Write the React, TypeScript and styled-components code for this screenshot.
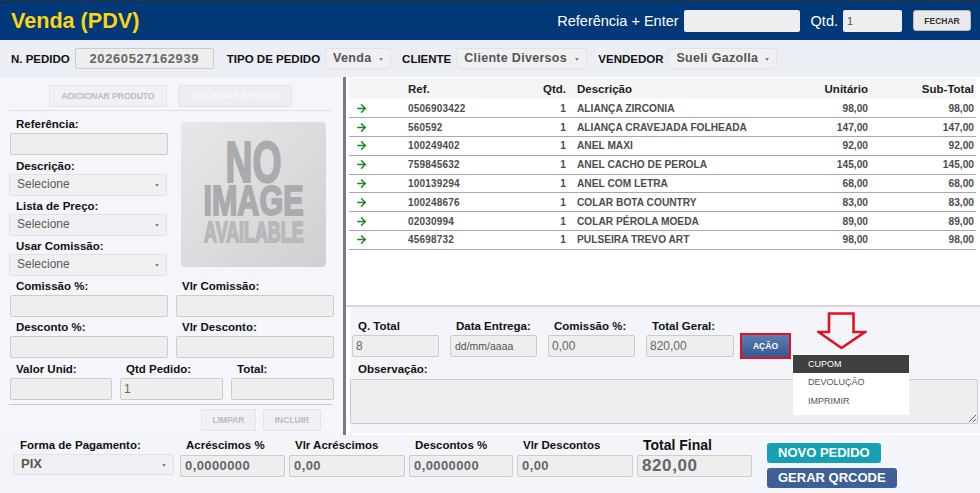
import React from "react";
import styled, { createGlobalStyle } from "styled-components";
import { ArrowRight } from "lucide-react";

const items = [
  { ref: "0506903422", name: "ALIANÇA ZIRCONIA", unit: "98,00" },
  { ref: "560592", name: "ALIANÇA CRAVEJADA FOLHEADA", unit: "147,00" },
  { ref: "100249402", name: "ANEL MAXI", unit: "92,00" },
  { ref: "759845632", name: "ANEL CACHO DE PEROLA", unit: "145,00" },
  { ref: "100139294", name: "ANEL COM LETRA", unit: "68,00" },
  { ref: "100248676", name: "COLAR BOTA COUNTRY", unit: "83,00" },
  { ref: "02030994", name: "COLAR PÉROLA MOEDA", unit: "89,00" },
  { ref: "45698732", name: "PULSEIRA TREVO ART", unit: "98,00" },
];

export default function App() {
  return (
    <>
      <GlobalStyle />
      <Page>
        <Header>
          <Title>Venda (PDV)</Title>
          <HeaderTools>
            <HeaderLabel>Referência + Enter</HeaderLabel>
            <HeaderInput $w={116} />
            <HeaderLabel $ml={11}>Qtd.</HeaderLabel>
            <HeaderInput $w={59} defaultValue="1" />
            <CloseButton>FECHAR</CloseButton>
          </HeaderTools>
        </Header>

        <OrderBar>
          <BarLabel>N. PEDIDO</BarLabel>
          <OrderNumber>20260527162939</OrderNumber>
          <BarLabel $ml={13}>TIPO DE PEDIDO</BarLabel>
          <BarSelect $w={66}>Venda<Caret /></BarSelect>
          <BarLabel $ml={11}>CLIENTE</BarLabel>
          <BarSelect $w={131}>Cliente Diversos<Caret /></BarSelect>
          <BarLabel $ml={11}>VENDEDOR</BarLabel>
          <BarSelect $w={109}>Sueli Gazolla<Caret /></BarSelect>
        </OrderBar>

        <Main>
          <LeftPanel>
            <TabRow>
              <GhostButton $w={118}>ADICIONAR PRODUTO</GhostButton>
              <GhostButton $w={114} $faint>ADICIONAR SERVIÇO</GhostButton>
            </TabRow>
            <ProductArea>
              <div>
                <FieldLabel>Referência:</FieldLabel>
                <Input $w={158} />
                <FieldLabel $mt={4}>Descrição:</FieldLabel>
                <SelectBox>Selecione<Caret /></SelectBox>
                <FieldLabel $mt={3}>Lista de Preço:</FieldLabel>
                <SelectBox>Selecione<Caret /></SelectBox>
                <FieldLabel $mt={3}>Usar Comissão:</FieldLabel>
                <SelectBox>Selecione<Caret /></SelectBox>
              </div>
              <NoImage>
                <NoImageLine $size={58} $scale={0.644} $mt={0}>NO</NoImageLine>
                <NoImageLine $size={43} $scale={0.71} $mt={4}>IMAGE</NoImageLine>
                <NoImageLine $size={29} $scale={0.615} $mt={6} $light>AVAILABLE</NoImageLine>
              </NoImage>
            </ProductArea>
            <TwoCols>
              <div>
                <FieldLabel>Comissão %:</FieldLabel>
                <Input $w={158} />
              </div>
              <div>
                <FieldLabel>Vlr Comissão:</FieldLabel>
                <Input $w={158} />
              </div>
              <div>
                <FieldLabel>Desconto %:</FieldLabel>
                <Input $w={158} />
              </div>
              <div>
                <FieldLabel>Vlr Desconto:</FieldLabel>
                <Input $w={158} />
              </div>
            </TwoCols>
            <ThreeCols>
              <div>
                <FieldLabel>Valor Unid:</FieldLabel>
                <Input $w={102} />
              </div>
              <div>
                <FieldLabel>Qtd Pedido:</FieldLabel>
                <Input $w={103} defaultValue="1" />
              </div>
              <div>
                <FieldLabel>Total:</FieldLabel>
                <Input $w={103} />
              </div>
            </ThreeCols>
            <ActionRow>
              <GhostButton $w={55}>LIMPAR</GhostButton>
              <GhostButton $w={58}>INCLUIR</GhostButton>
            </ActionRow>
          </LeftPanel>

          <RightPanel>
            <TableWrap>
              <ItemsTable>
                <colgroup>
                  <col style={{ width: 57 }} />
                  <col style={{ width: 123 }} />
                  <col style={{ width: 39 }} />
                  <col />
                  <col style={{ width: 100 }} />
                  <col style={{ width: 106 }} />
                </colgroup>
                <thead>
                  <tr>
                    <Th />
                    <Th>Ref.</Th>
                    <Th $right>Qtd.</Th>
                    <Th>Descrição</Th>
                    <Th $right>Unitário</Th>
                    <Th $right>Sub-Total</Th>
                  </tr>
                </thead>
                <tbody>
                  {items.map((item) => (
                    <tr key={item.ref}>
                      <Td><ArrowCell><ArrowRight size={13} strokeWidth={2.7} color="#16881c" /></ArrowCell></Td>
                      <RefCell>{item.ref}</RefCell>
                      <Td $right>1</Td>
                      <Td>{item.name}</Td>
                      <Td $right>{item.unit}</Td>
                      <Td $right>{item.unit}</Td>
                    </tr>
                  ))}
                </tbody>
              </ItemsTable>
            </TableWrap>

            <SummaryBox>
              <SummaryRow>
                <SummaryField>
                  <SummaryLabel>Q. Total</SummaryLabel>
                  <Input $w={87} defaultValue="8" />
                </SummaryField>
                <SummaryField>
                  <SummaryLabel>Data Entrega:</SummaryLabel>
                  <DateBox>dd/mm/aaaa</DateBox>
                </SummaryField>
                <SummaryField>
                  <SummaryLabel>Comissão %:</SummaryLabel>
                  <Input $w={87} defaultValue="0,00" />
                </SummaryField>
                <SummaryField>
                  <SummaryLabel>Total Geral:</SummaryLabel>
                  <Input $w={88} defaultValue="820,00" />
                </SummaryField>
                <ActionOutline>
                  <ActionButton>AÇÃO</ActionButton>
                </ActionOutline>
              </SummaryRow>
              <FieldLabel $mt={3} $ml={8}>Observação:</FieldLabel>
              <Notes />
              <DownArrow width="50" height="38" viewBox="0 0 50 38">
                <path d="M12 1.5H36.5V20H48L24.5 36L1.5 20H12Z" fill="#f4f5fa" stroke="#e0121f" strokeWidth="2.6" />
              </DownArrow>
              <Dropdown>
                <DropItem $active>CUPOM</DropItem>
                <DropItem>DEVOLUÇÃO</DropItem>
                <DropItem>IMPRIMIR</DropItem>
              </Dropdown>
            </SummaryBox>
          </RightPanel>
        </Main>

        <Footer>
          <PayField $w={161} $mr={6}>
            <PayLabel $ml={7}>Forma de Pagamento:</PayLabel>
            <PaySelect>PIX<Caret /></PaySelect>
          </PayField>
          <PayField $w={105} $mr={4}>
            <PayLabel>Acréscimos %</PayLabel>
            <PayBox>0,0000000</PayBox>
          </PayField>
          <PayField $w={116} $mr={4}>
            <PayLabel>Vlr Acréscimos</PayLabel>
            <PayBox>0,00</PayBox>
          </PayField>
          <PayField $w={104} $mr={4}>
            <PayLabel>Descontos %</PayLabel>
            <PayBox>0,0000000</PayBox>
          </PayField>
          <PayField $w={116} $mr={4}>
            <PayLabel>Vlr Descontos</PayLabel>
            <PayBox>0,00</PayBox>
          </PayField>
          <PayField $w={115} $mr={15}>
            <FinalLabel>Total Final</FinalLabel>
            <PayBox $big>820,00</PayBox>
          </PayField>
          <FooterButtons>
            <BigButton $bg="#17a0b4">NOVO PEDIDO</BigButton>
            <BigButton $bg="#3f5f97">GERAR QRCODE</BigButton>
          </FooterButtons>
        </Footer>
      </Page>
    </>
  );
}

const GlobalStyle = createGlobalStyle`
  html, body {
    margin: 0;
    padding: 0;
    background: #fff;
    font-family: "Liberation Sans", Arial, sans-serif;
    overflow: hidden;
  }
  * {
    box-sizing: border-box;
  }
`;

const Page = styled.div`
  width: 980px;
  height: 493px;
  display: flex;
  flex-direction: column;
  background: #eceef6;
`;

const Header = styled.div`
  height: 40px;
  flex: none;
  display: flex;
  align-items: center;
  justify-content: space-between;
  padding: 0 9px 0 11px;
  background: #003878;
  border-top: 1px solid #333;
`;

const Title = styled.div`
  color: #fbd512;
  font-size: 21.6px;
  font-weight: bold;
`;

const HeaderTools = styled.div`
  display: flex;
  align-items: center;
`;

const HeaderLabel = styled.span<{ $ml?: number }>`
  color: #fff;
  font-size: 14.5px;
  margin-left: ${(p) => p.$ml || 0}px;
  margin-right: 5px;
`;

const HeaderInput = styled.input<{ $w: number }>`
  width: ${(p) => p.$w}px;
  height: 22px;
  border: 0;
  border-radius: 2px;
  background: #eee;
  font-family: inherit;
  font-size: 11px;
  color: #555;
  padding: 0 4px;
`;

const CloseButton = styled.div`
  width: 58px;
  height: 21px;
  margin-left: 11px;
  border-radius: 3px;
  border: 1px solid #bbb;
  background: #e9e9e9;
  color: #333;
  font-size: 8.5px;
  font-weight: bold;
  display: flex;
  align-items: center;
  justify-content: center;
`;

const OrderBar = styled.div`
  height: 37px;
  flex: none;
  display: flex;
  align-items: center;
  padding: 0 0 0 11px;
  background: #eceef6;
`;

const BarLabel = styled.span<{ $ml?: number }>`
  color: #111;
  font-size: 11.5px;
  font-weight: bold;
  margin-left: ${(p) => p.$ml || 0}px;
  margin-right: 5px;
  white-space: nowrap;
`;

const OrderNumber = styled.div`
  width: 139px;
  height: 21px;
  border: 1px solid #ccc;
  border-radius: 2px;
  background: #eee;
  color: #666;
  font-size: 13px;
  font-weight: bold;
  letter-spacing: 0.6px;
  display: flex;
  align-items: center;
  justify-content: center;
`;

const Caret = styled.i`
  position: absolute;
  right: 7px;
  top: 50%;
  margin-top: -1px;
  border-left: 2.5px solid transparent;
  border-right: 2.5px solid transparent;
  border-top: 3px solid #888;
`;

const BarSelect = styled.div<{ $w: number }>`
  position: relative;
  width: ${(p) => p.$w}px;
  height: 21px;
  border: 1px solid #e2e3ea;
  border-radius: 3px;
  background: #f0f0f2;
  color: #555;
  font-size: 12.5px;
  font-weight: bold;
  letter-spacing: 0.3px;
  line-height: 19px;
  padding-left: 7px;
  white-space: nowrap;
`;

const Main = styled.div`
  height: 358px;
  flex: none;
  display: flex;
  background: #f4f5fa;
`;

const LeftPanel = styled.div`
  width: 346px;
  flex: none;
  padding: 8px 0 0 10px;
  background: #f5f6fb;
  border-right: 3px solid #7b7b7f;
`;

const TabRow = styled.div`
  height: 26px;
  width: 323px;
  margin-left: -1px;
  padding-left: 40px;
  display: flex;
  gap: 11px;
  border-bottom: 1px solid #e2e3e6;
`;

const GhostButton = styled.div<{ $w: number; $faint?: boolean }>`
  width: ${(p) => p.$w}px;
  height: 22px;
  border: 1px solid #e4e5e9;
  border-radius: 2px;
  background: ${(p) => (p.$faint ? "#eeeef0" : "#f0f1f4")};
  color: ${(p) => (p.$faint ? "#f8f8f8" : "#bbbbbf")};
  font-size: 8.5px;
  font-weight: bold;
  display: flex;
  align-items: center;
  justify-content: center;
  white-space: nowrap;
`;

const ProductArea = styled.div`
  display: grid;
  grid-template-columns: 171px 145px;
  margin-top: 6px;
`;

const FieldLabel = styled.div<{ $mt?: number; $ml?: number }>`
  height: 14px;
  line-height: 14px;
  margin-top: ${(p) => p.$mt || 0}px;
  margin-left: ${(p) => (p.$ml === undefined ? 6 : p.$ml)}px;
  margin-bottom: 2px;
  color: #111;
  font-size: 11.5px;
  font-weight: bold;
  white-space: nowrap;
`;

const Input = styled.input<{ $w: number }>`
  display: block;
  width: ${(p) => p.$w}px;
  height: 22px;
  border: 1px solid #ccc;
  border-radius: 2px;
  background: #eeeeef;
  color: #666;
  font-family: inherit;
  font-size: 12px;
  padding: 0 3px;
`;

const SelectBox = styled.div`
  position: relative;
  width: 158px;
  height: 22px;
  margin: -1px 0 0 -1px;
  border: 1px solid #e0e1e8;
  border-radius: 3px;
  background: #f0f0f2;
  color: #5c5c5c;
  font-size: 12px;
  line-height: 18px;
  padding-left: 7px;
`;

const NoImage = styled.div`
  width: 145px;
  height: 145px;
  margin-top: 5px;
  padding-top: 20px;
  border-radius: 4px;
  background: linear-gradient(135deg, #e8e8ea, #cfd0d2);
  display: flex;
  flex-direction: column;
  align-items: center;
`;

const NoImageLine = styled.div<{ $size: number; $scale: number; $mt: number; $light?: boolean }>`
  flex: none;
  margin-top: ${(p) => p.$mt}px;
  font-size: ${(p) => p.$size}px;
  line-height: 0.69em;
  height: 0.69em;
  font-weight: bold;
  white-space: nowrap;
  color: ${(p) => (p.$light ? "#b7b8ba" : "#a9abad")};
  -webkit-text-stroke: 2px ${(p) => (p.$light ? "#b7b8ba" : "#a9abad")};
  transform: scaleX(${(p) => p.$scale});
`;

const TwoCols = styled.div`
  display: grid;
  grid-template-columns: 158px 158px;
  column-gap: 8px;
  row-gap: 3px;
  margin-top: 3px;
`;

const ThreeCols = styled.div`
  display: grid;
  grid-template-columns: 102px 103px 103px;
  column-gap: 8px;
  margin-top: 4px;
`;

const ActionRow = styled.div`
  width: 323px;
  height: 31px;
  margin-top: 4px;
  margin-left: -1px;
  padding: 4px 11px 0 0;
  display: flex;
  justify-content: flex-end;
  gap: 7px;
  border-top: 1px solid #c9cacd;
`;

const RightPanel = styled.div`
  flex: 1;
  display: flex;
  flex-direction: column;
  background: #fff;
`;

const TableWrap = styled.div`
  height: 230px;
  flex: none;
  padding: 1px 4px 0 3px;
  border-bottom: 2px solid #d9d9d9;
`;

const ItemsTable = styled.table`
  width: 100%;
  border-collapse: collapse;
  table-layout: fixed;

  th:nth-child(4),
  td:nth-child(4) {
    padding-left: 9px;
  }
`;

const Th = styled.th<{ $right?: boolean }>`
  height: 21px;
  padding: 0 2px;
  background: #f5f5f6;
  color: #222;
  font-size: 11.5px;
  font-weight: bold;
  text-align: ${(p) => (p.$right ? "right" : "left")};
`;

const Td = styled.td<{ $right?: boolean }>`
  height: 18.8px;
  padding: 0 2px;
  border-bottom: 1px solid #a9a9a9;
  color: #4d4d4d;
  font-size: 10.2px;
  font-weight: bold;
  text-align: ${(p) => (p.$right ? "right" : "left")};
  white-space: nowrap;
`;

const RefCell = styled(Td)`
  font-size: 10px;
  letter-spacing: 0.2px;
`;

const ArrowCell = styled.span`
  display: flex;
  margin-left: 4px;
`;

const SummaryBox = styled.div`
  position: relative;
  flex: 1;
  margin-left: 4px;
  padding-top: 12px;
  background: #f4f5fa;
  border-bottom: 2px solid #fff;
`;

const SummaryRow = styled.div`
  display: flex;
  gap: 11px;
  padding-left: 2px;
`;

const SummaryField = styled.div`
  display: flex;
  flex-direction: column;
`;

const SummaryLabel = styled.div`
  height: 14px;
  line-height: 14px;
  margin-bottom: 2px;
  padding-left: 6px;
  color: #111;
  font-size: 11.5px;
  font-weight: bold;
  white-space: nowrap;
`;

const DateBox = styled.div`
  width: 87px;
  height: 22px;
  border: 1px solid #ccc;
  border-radius: 2px;
  background: #eeeeef;
  color: #555;
  font-size: 10.5px;
  line-height: 20px;
  padding-left: 4px;
`;

const ActionOutline = styled.div`
  width: 51px;
  height: 26px;
  margin-top: 14px;
  margin-left: -5px;
  padding: 2px;
  background: #e2121f;
`;

const ActionButton = styled.div`
  height: 22px;
  background: linear-gradient(#5a7fb5, #34578f);
  color: #fff;
  font-size: 8.5px;
  font-weight: bold;
  text-align: center;
  line-height: 22px;
`;

const Notes = styled.textarea`
  display: block;
  width: 628px;
  height: 45px;
  margin: 3px 0 0;
  border: 1px solid #ccc;
  border-radius: 2px;
  background: #eeeeef;
`;

const DownArrow = styled.svg`
  position: absolute;
  left: 467px;
  top: 5px;
`;

const Dropdown = styled.div`
  position: absolute;
  left: 443px;
  top: 47px;
  width: 116px;
  height: 61px;
  padding-top: 1px;
  background: #fff;
`;

const DropItem = styled.div<{ $active?: boolean }>`
  height: ${(p) => (p.$active ? 18 : 19)}px;
  padding-left: 15px;
  background: ${(p) => (p.$active ? "#3f3f3f" : "transparent")};
  color: ${(p) => (p.$active ? "#fff" : "#555")};
  font-size: 9px;
  line-height: ${(p) => (p.$active ? 18 : 19)}px;
`;

const Footer = styled.div`
  flex: 1;
  display: flex;
  align-items: flex-start;
  padding: 3px 0 0 13px;
  background: #f4f5fa;
`;

const PayField = styled.div<{ $w: number; $mr: number }>`
  width: ${(p) => p.$w}px;
  margin-right: ${(p) => p.$mr}px;
`;

const PayLabel = styled.div<{ $ml?: number }>`
  height: 14px;
  line-height: 14px;
  margin: 0 0 3px ${(p) => (p.$ml === undefined ? 6 : p.$ml)}px;
  color: #111;
  font-size: 11.5px;
  font-weight: bold;
  white-space: nowrap;
`;

const FinalLabel = styled.div`
  height: 14px;
  line-height: 14px;
  margin: 0 0 3px 6px;
  color: #111;
  font-size: 14px;
  font-weight: bold;
  white-space: nowrap;
`;

const PaySelect = styled.div`
  position: relative;
  height: 21px;
  margin-top: -1px;
  border: 1px solid #e0e1e8;
  border-radius: 3px;
  background: #f0f0f2;
  color: #555;
  font-size: 13px;
  font-weight: bold;
  line-height: 17px;
  padding-left: 7px;
`;

const PayBox = styled.div<{ $big?: boolean }>`
  height: 22px;
  border: 1px solid #ccc;
  border-radius: 2px;
  background: #eeeeef;
  color: #666;
  font-size: ${(p) => (p.$big ? 17 : 13)}px;
  font-weight: bold;
  letter-spacing: ${(p) => (p.$big ? 0.6 : 0.4)}px;
  line-height: 20px;
  padding-left: 4px;
`;

const FooterButtons = styled.div`
  display: flex;
  flex-direction: column;
  align-items: flex-start;
  gap: 5px;
  margin-top: 5px;
`;

const BigButton = styled.div<{ $bg: string }>`
  height: 20px;
  padding: 0 11px;
  border-radius: 3px;
  background: ${(p) => p.$bg};
  color: #fff;
  font-size: 13px;
  font-weight: bold;
  line-height: 20px;
  white-space: nowrap;
`;
